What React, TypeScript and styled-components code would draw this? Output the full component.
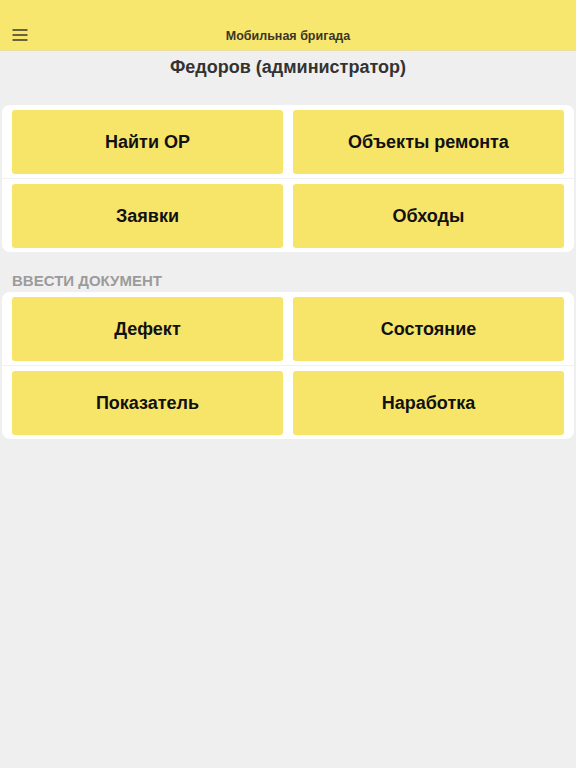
import React from 'react';
import styled, { createGlobalStyle } from 'styled-components';

const GlobalStyle = createGlobalStyle`
  html, body {
    margin: 0;
    padding: 0;
    background: #f0efef;
    font-family: "Liberation Sans", Arial, sans-serif;
  }
`;

type Group = {
  title?: string;
  items: string[][];
};

const groups: Group[] = [
  { items: [['Найти ОР', 'Объекты ремонта'], ['Заявки', 'Обходы']] },
  { title: 'ВВЕСТИ ДОКУМЕНТ', items: [['Дефект', 'Состояние'], ['Показатель', 'Наработка']] },
];

const MenuIcon = () => (
  <svg width="16" height="12" viewBox="0 0 16 12">
    <g stroke="#3a3a2a" strokeWidth="1.4" strokeLinecap="round">
      <line x1="1" y1="1" x2="15" y2="1" />
      <line x1="1" y1="6" x2="15" y2="6" />
      <line x1="1" y1="11" x2="15" y2="11" />
    </g>
  </svg>
);

export default function App() {
  return (
    <>
      <GlobalStyle />
      <Page>
        <Header>
          <MenuButton>
            <MenuIcon />
          </MenuButton>
          <HeaderTitle>Мобильная бригада</HeaderTitle>
        </Header>
        <UserName>Федоров (администратор)</UserName>
        {groups.map((group, gi) => (
          <Section key={gi} first={gi === 0}>
            {group.title && <SectionTitle>{group.title}</SectionTitle>}
            <Panel>
              {group.items.map((row, ri) => (
                <React.Fragment key={ri}>
                  {ri > 0 && <Divider />}
                  <Row>
                    {row.map((label) => (
                      <Tile key={label}>{label}</Tile>
                    ))}
                  </Row>
                </React.Fragment>
              ))}
            </Panel>
          </Section>
        ))}
      </Page>
    </>
  );
}

const Page = styled.div`
  min-height: 768px;
  background: #f0efef;
`;

const Header = styled.header`
  position: relative;
  height: 51px;
  background: #f8e76e;
  border-bottom: 1px solid #ece0a0;
  box-sizing: border-box;
  display: flex;
  align-items: flex-end;
  justify-content: center;
  padding-bottom: 6px;
`;

const MenuButton = styled.div`
  position: absolute;
  left: 12px;
  top: 29px;
  line-height: 0;
`;

const HeaderTitle = styled.div`
  font-size: 12.5px;
  font-weight: bold;
  color: #3b3623;
  line-height: 16px;
`;

const UserName = styled.div`
  margin-top: 4px;
  text-align: center;
  font-size: 18px;
  font-weight: bold;
  color: #333333;
  line-height: 24px;
`;

const Section = styled.section<{ first?: boolean }>`
  margin-top: ${(p) => (p.first ? '26px' : '21px')};
`;

const SectionTitle = styled.div`
  padding: 0 12px;
  font-size: 15px;
  font-weight: bold;
  color: #9b9b9b;
  line-height: 16px;
  margin-bottom: 3px;
`;

const Panel = styled.div`
  margin: 0 2px;
  padding: 5px 10px 4px;
  background: #ffffff;
  border-radius: 8px;
  display: flex;
  flex-direction: column;
`;

const Row = styled.div`
  display: grid;
  grid-template-columns: 1fr 1fr;
  gap: 10px;
`;

const Divider = styled.div`
  height: 10px;
  margin: 0 -10px;
  background: linear-gradient(#ffffff 4px, #f1f1f1 4px, #f1f1f1 5px, #ffffff 5px);
`;

const Tile = styled.div`
  height: 64px;
  background: #f7e56a;
  border-radius: 3px;
  display: flex;
  align-items: center;
  justify-content: center;
  font-size: 18px;
  font-weight: bold;
  color: #111111;
`;
